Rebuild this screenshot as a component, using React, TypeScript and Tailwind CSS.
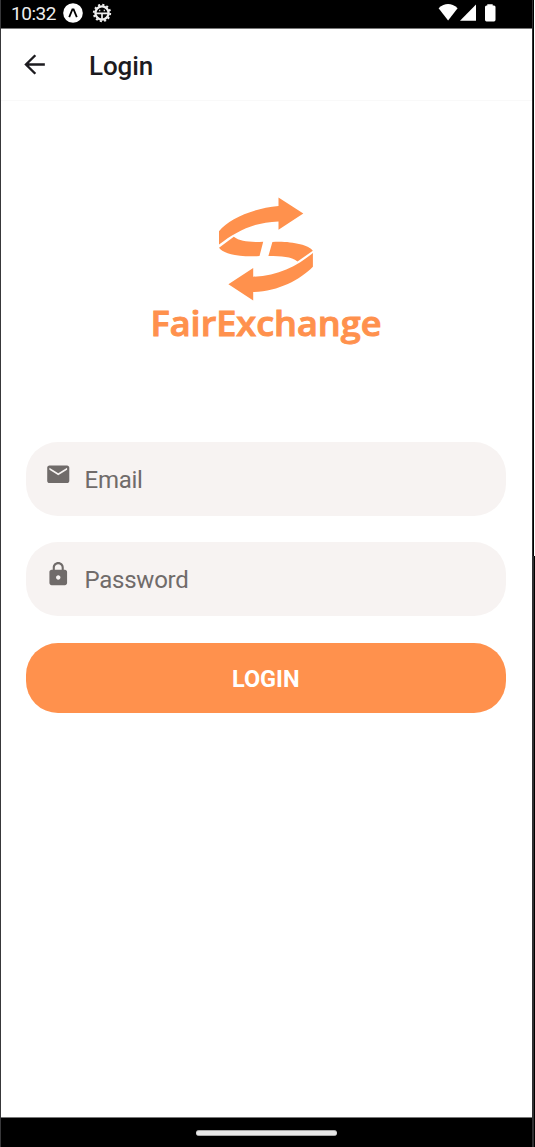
const orange = "#ff914d";

function StatusBar() {
  return (
    <header className="flex h-7 shrink-0 items-start bg-black pl-[10px] text-white">
      <span className="mt-[2px] w-[52px] text-[19px] leading-6 tracking-[-0.45px] text-[#eee]">10:32</span>
      <svg className="mt-[3px] h-5 w-5" viewBox="0 0 20 20">
        <circle cx="10" cy="10" r="9.8" fill="white" />
        <path d="M6.2 14.2 9.4 6.5H10.6L13.8 14.2" fill="none" stroke="black" strokeWidth="1.8" />
      </svg>
      <svg className="ml-[9px] mt-[3px] h-5 w-5" viewBox="0 0 20 20" fill="none" stroke="#eee">
        <circle cx="10" cy="10" r="8.2" strokeWidth="1.9" strokeDasharray="2.1 2.194" />
        <circle cx="10" cy="10" r="6.6" strokeWidth="2.3" />
        <path d="M4 10.3h12M10 10.3v6" strokeWidth="1.7" />
        <path d="M7.1 7.5h1.2M11.7 7.5h1.2" strokeWidth="1.3" />
      </svg>
      <svg className="ml-auto mr-[36px] mt-[3px] h-5 w-[58px]" viewBox="0 0 58 20" fill="#fff">
        <path d="M.6 5.2Q10 -3 19.6 5.2L10.1 17.4Z" />
        <path d="M22 17.8 38 1.5V17.8Z" />
        <path d="M49.3 2.5V1.2H54.7V2.5H56Q57.5 2.5 57.5 4V16.8Q57.5 18.4 56 18.4H48.5Q47 18.4 47 16.8V4Q47 2.5 48.5 2.5Z" />
      </svg>
    </header>
  );
}

function Logo() {
  return (
    <div className="mt-[95px] flex w-[529px] flex-col items-center">
      <svg className="h-[106px] w-[96px]" viewBox="218 196 96 106" fill={orange}>
        <path d="M219 244.6V231.2C229 219 252 208.5 278.5 206V197.5L303.3 213.6 278.5 229.8V221.4C254 222 236 231.5 219 244.6Z" />
        <path d="M219 247.8 233.8 236.8C240 241.5 250 242.5 263.2 241.7L259.5 256C241 257.3 223 254.2 219 247.8Z" />
        <path d="M272.4 242C289 240.8 309 244.5 312.8 250.8L297.5 261.5C291 256.5 282 256 268.4 256Z" />
        <path d="M312.9 253V266.8C300 280 278 291.5 253.2 292V300.4L228.4 284.2 253.2 268V276.7C278 276 298 265.5 312.9 253Z" />
      </svg>
      <svg className="h-12 w-[244px] overflow-visible" viewBox="0 0 244 48">
        <text x="6.5" y="34" textLength="231" lengthAdjust="spacingAndGlyphs" fill={orange} stroke={orange} strokeWidth="1" fontFamily="Open Sans, sans-serif" fontWeight="600" fontSize="35">FairExchange</text>
      </svg>
    </div>
  );
}

function Field({ label, icon }: { label: string; icon: string }) {
  return (
    <label className="flex h-[74px] items-start rounded-[32px] bg-[#f7f3f2] pl-[19px] text-[#706b6a]">
      <svg className="mt-[19px] h-[26.5px] w-[26.5px] shrink-0" viewBox="0 0 24 24" fill="currentColor">
        <path d={icon} />
      </svg>
      <span className="ml-[13px] mt-[22px] text-[24px] leading-8 tracking-[-0.25px]">{label}</span>
    </label>
  );
}

export default function App() {
  return (
    <div className="flex h-[1147px] w-[535px] bg-black font-['Roboto',sans-serif]">
      <div className="w-px bg-[#38383a]" />
      <div className="flex w-[531px] flex-col bg-white">
        <StatusBar />
        <nav className="flex h-[73px] shrink-0 items-center border-b border-t border-b-[#f9f9f9] border-t-[#777] pl-[18px] text-[#1c1b1f]">
          <svg className="h-[31px] w-[31px]" viewBox="0 0 24 24" fill="currentColor">
            <path d="M20 11.1H7.6l5.7-5.65L12 4.2 4.1 12l7.9 7.8 1.3-1.25-5.7-5.65H20z" />
          </svg>
          <h1 className="ml-[39px] mt-[2px] text-[26px] font-medium leading-8 tracking-[-0.1px]">Login</h1>
        </nav>
        <main className="flex grow flex-col">
          <Logo />
          <form className="ml-[25px] mt-[92px] flex w-[479.5px] flex-col gap-[26px]">
            <Field label="Email" icon="M20 4H4c-1.1 0-1.99.9-1.99 2L2 18c0 1.1.9 2 2 2h16c1.1 0 2-.9 2-2V6c0-1.1-.9-2-2-2zm0 4-8 5-8-5V6l8 5 8-5v2z" />
            <Field label="Password" icon="M18 8h-1V6c0-2.76-2.24-5-5-5S7 3.24 7 6v2H6c-1.1 0-2 .9-2 2v10c0 1.1.9 2 2 2h12c1.1 0 2-.9 2-2V10c0-1.1-.9-2-2-2zm-6 9c-1.1 0-2-.9-2-2s.9-2 2-2 2 .9 2 2-.9 2-2 2zm3.1-9H8.9V6c0-1.71 1.39-3.1 3.1-3.1 1.71 0 3.1 1.39 3.1 3.1v2z" />
            <button type="button" className="mt-px h-[70px] rounded-[32px] bg-[#ff914d] pt-[3px] text-[23.5px] font-bold text-white">LOGIN</button>
          </form>
        </main>
        <footer className="flex h-[30px] shrink-0 justify-center border-t border-[#777] bg-black pt-[12px]">
          <div className="h-[6px] w-[141px] rounded-full border-y border-[#aaa] bg-[#e8e8e8]" />
        </footer>
      </div>
      <div className="flex w-[3px] flex-col">
        <div className="h-[556px] border-l border-r border-l-[#303032] border-r-white bg-black" />
        <div className="grow border-r border-black bg-[#303032]" />
      </div>
    </div>
  );
}
